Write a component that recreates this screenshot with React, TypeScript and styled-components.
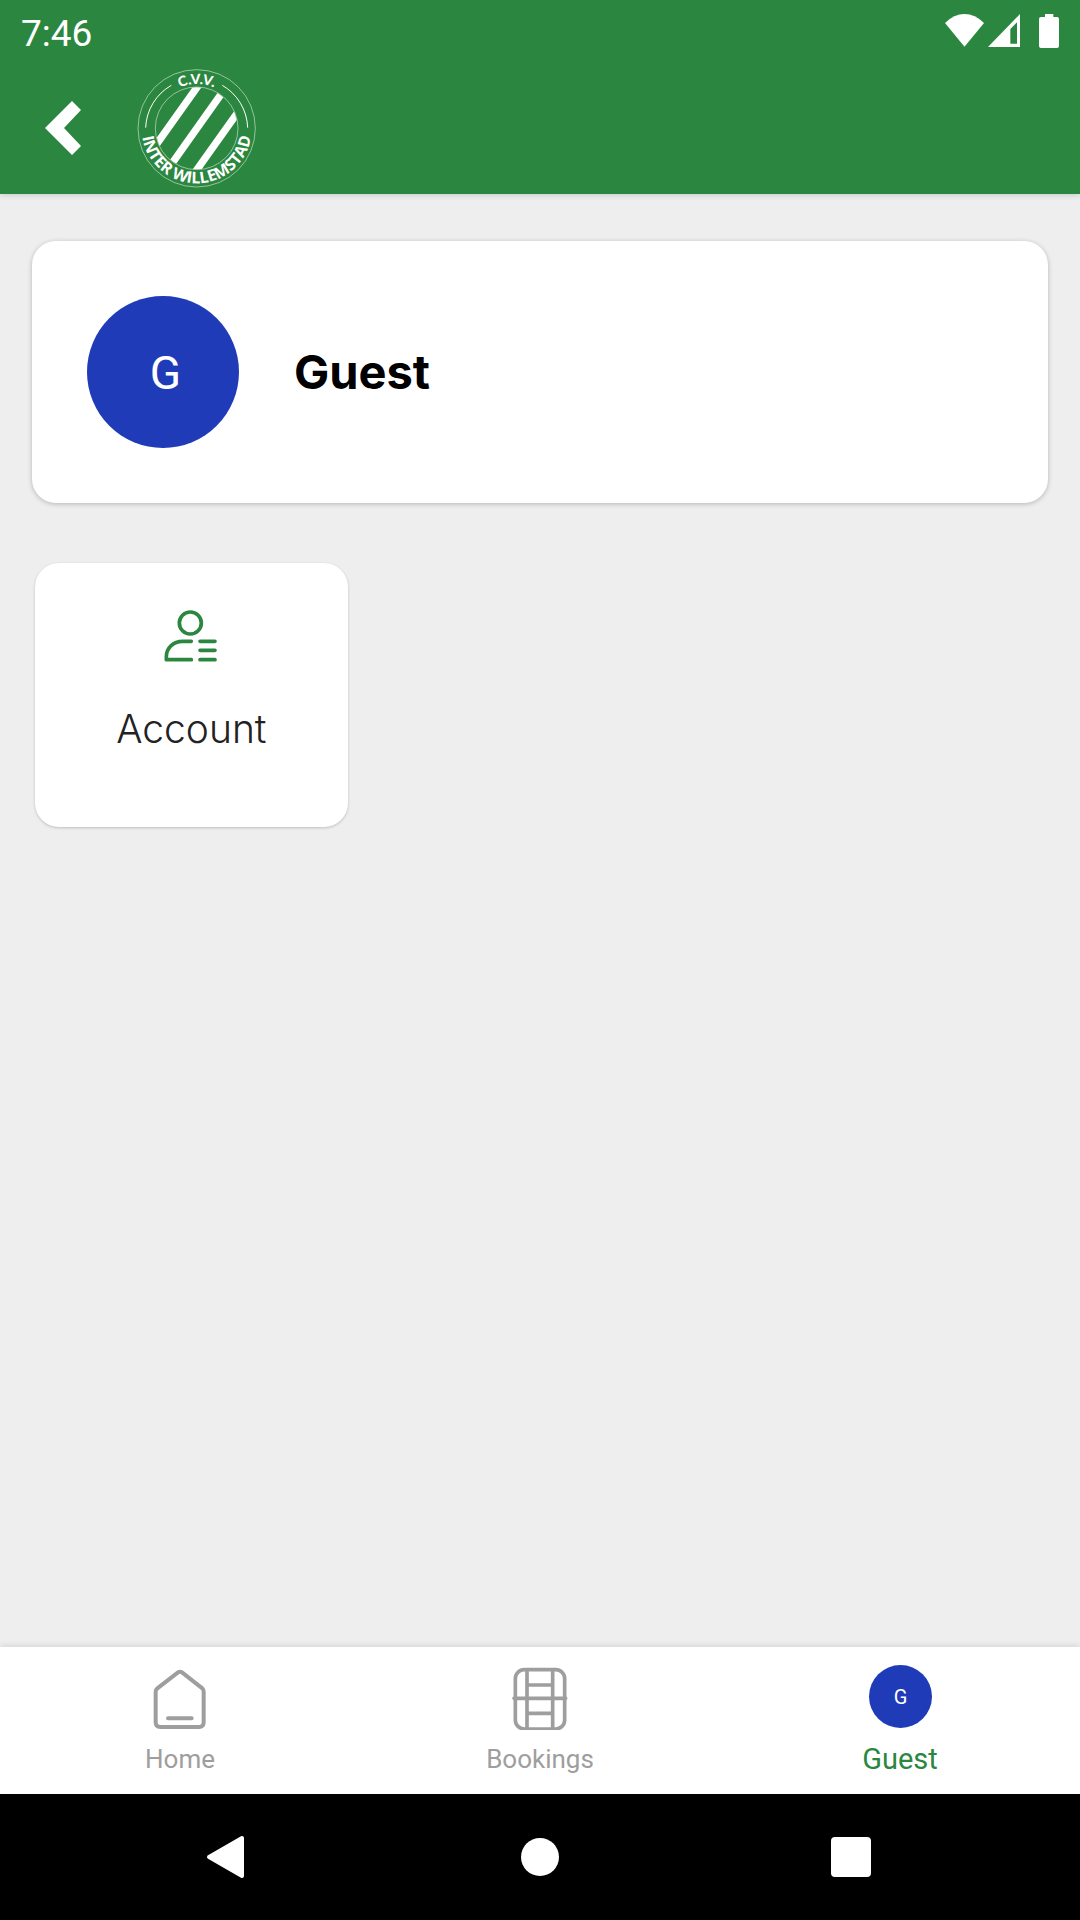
import React from "react";
import styled, { createGlobalStyle } from "styled-components";

const GREEN = "#2b873f";
const BLUE = "#1f3bb8";
const GREY = "#9e9e9e";

const GlobalStyle = createGlobalStyle`
  *, *::before, *::after { box-sizing: border-box; }
  body { margin: 0; background: #eeeeee; }
  button { font: inherit; color: inherit; background: none; border: 0; padding: 0; cursor: pointer; }
  svg { display: block; flex: none; }
`;

const Screen = styled.div`
  min-height: 100vh;
  display: flex;
  flex-direction: column;
  background: #eeeeee;
  font-family: Roboto, "Noto Sans", sans-serif;
`;

const TopArea = styled.header`
  background: ${GREEN};
  color: #fff;
  box-shadow: 0 1px 6px rgba(0, 0, 0, 0.16);
`;

const StatusBar = styled.div`
  display: flex;
  justify-content: space-between;
  height: 64px;
  padding: 13px 21px 0;
  font-size: 37px;
  line-height: 42px;
`;

const StatusIcons = styled.div`
  display: flex;
  align-items: flex-start;
  gap: 4px;
  padding-top: 1px;
`;

const Toolbar = styled.div`
  display: flex;
  align-items: center;
  gap: 48px;
  height: 130px;
  padding: 0 37px 2px;
`;

const BackButton = styled.button`
  display: grid;
  place-items: center;
  width: 52px;
  height: 64px;
`;

const Content = styled.main`
  flex: 1;
  display: flex;
  flex-direction: column;
  align-items: stretch;
  gap: 60px;
  padding: 47px 32px;
`;

const Card = styled.section`
  background: #fff;
  border-radius: 24px;
  box-shadow: 0 1px 5px rgba(0, 0, 0, 0.24);
`;

const ProfileCard = styled(Card)`
  display: flex;
  align-items: center;
  gap: 55px;
  padding: 55px;
`;

const Avatar = styled.span<{ $size: number; $font: number }>`
  display: grid;
  place-items: center;
  flex: none;
  width: ${(p) => p.$size}px;
  height: ${(p) => p.$size}px;
  padding: ${(p) => (p.$size > 100 ? "2px 0 0 5px" : "2px 0 0 1px")};
  border-radius: 50%;
  background: ${BLUE};
  color: #fff;
  font-size: ${(p) => p.$font}px;
  line-height: 1;
`;

const ProfileName = styled.h1`
  margin: 0;
  font: 700 47px/56px Inter, sans-serif;
  color: #000;
`;

const TileGrid = styled.div`
  display: grid;
  grid-template-columns: repeat(3, 1fr);
  gap: 36px;
  padding: 0 3px;
`;

const Tile = styled.button`
  && {
    display: flex;
    flex-direction: column;
    align-items: center;
    gap: 43px;
    height: 264px;
    padding-top: 47px;
    background: #fff;
    border-radius: 24px;
    box-shadow: 0 1px 3px rgba(0, 0, 0, 0.2);
    color: #222;
    font: 300 39px/48px Inter, sans-serif;
  }
`;

const TabBar = styled.nav`
  display: grid;
  grid-template-columns: repeat(3, 1fr);
  height: 147px;
  background: #fff;
  box-shadow: 0 -1px 6px rgba(0, 0, 0, 0.12);
`;

const Tab = styled.a<{ $active?: boolean }>`
  display: flex;
  flex-direction: column;
  align-items: center;
  gap: 11px;
  padding-top: 15px;
  color: ${(p) => (p.$active ? GREEN : GREY)};
  font-size: ${(p) => (p.$active ? 29 : 26)}px;
  line-height: 36px;
  text-decoration: none;
`;

const TabIcon = styled.span`
  display: grid;
  place-items: center;
  height: 68px;
`;

const SystemBar = styled.div`
  display: flex;
  justify-content: center;
  align-items: center;
  gap: 247px;
  height: 126px;
  background: #000;
  color: #fff;
`;

const SystemButton = styled.button`
  display: grid;
  place-items: center;
  width: 64px;
  height: 64px;
`;

const ClubLogo = () => (
  <svg width="120" height="120" viewBox="21 18 360 360" role="img" aria-label="C.V.V. Inter Willemstad">
    <defs>
      <clipPath id="inner"><circle cx="200" cy="199" r="123" /></clipPath>
      <path id="topArc" d="M67 199 A133 133 0 0 1 333 199" />
      <path id="bottomArc" d="M35 180 V199 A165 165 0 0 0 365 199 V180" />
    </defs>
    <g fill="none" stroke="#fff">
      <circle cx="200" cy="199" r="176" strokeWidth="2" opacity="0.75" />
      <circle cx="200" cy="199" r="124" strokeWidth="2" opacity="0.75" />
      <path d="M47 197 A153 153 0 0 1 124 70 M277 70 A153 153 0 0 1 353 197" strokeWidth="3" />
    </g>
    <g clipPath="url(#inner)" stroke="#fff" strokeWidth="22">
      <path d="M223 45 L53 284 M295 66 L107 331 M341 126 L183 348" />
    </g>
    <g fill="#fff" textAnchor="middle">
      <text fontSize="42" fontWeight="900" fontFamily="Lato, sans-serif"><textPath href="#topArc" startOffset="50%">C.V.V.</textPath></text>
      <text fontSize="48" fontWeight="700" fontFamily="'Open Sans', sans-serif"><textPath href="#bottomArc" startOffset="50%">INTER WILLEMSTAD</textPath></text>
    </g>
  </svg>
);

const WifiIcon = () => (
  <svg width="39" height="33" viewBox="75 42 117 99" fill="#fff">
    <path d="M75 69 Q102 42 133.500 42 Q165 42 192 69 L133.500 140 Z" />
  </svg>
);

const SignalIcon = () => (
  <svg width="32" height="33" viewBox="203 42 96 99" fill="#fff">
    <path fillRule="evenodd" d="M299 42 V141 H203 Z M290 67 L270 87 V131 H290 Z" />
  </svg>
);

const BatteryIcon = () => (
  <svg width="35" height="34" viewBox="312 42 105 102" fill="#fff">
    <path d="M375 42 H400 V51 H411 Q417 51 417 57 V138 Q417 144 411 144 H363 Q357 144 357 138 V57 Q357 51 363 51 H375 Z" />
  </svg>
);

const AccountIcon = () => (
  <svg width="54" height="52" viewBox="42 45 162 156" fill="none" stroke={GREEN} strokeWidth="11" strokeLinecap="round" strokeLinejoin="round">
    <circle cx="121" cy="84" r="33" />
    <path d="M124 139 H98 C69 139 49 160 49 185 V194 H124 M150 139 H195 M150 166 H195 M150 194 H195" />
  </svg>
);

const HomeIcon = () => (
  <svg width="56" height="68" viewBox="65 66 168 204" fill="none" stroke={GREY} strokeWidth="12" strokeLinecap="round" strokeLinejoin="round">
    <path d="M143 97 Q149 93 155 97 L216 145 Q220 149 220 155 V247 Q220 261 206 261 H90 Q76 261 76 247 V155 Q76 149 81 145 Z M113 235 H184" />
  </svg>
);

const BookingsIcon = () => (
  <svg width="56" height="68" viewBox="125 66 168 204" fill="none" stroke={GREY} strokeWidth="11" strokeLinecap="round">
    <rect x="135" y="89" width="148" height="178" rx="27" />
    <path d="M170 90 V266 M247 90 V266 M170 135 H247 M170 220 H247 M131 175 H286" />
  </svg>
);

export default function App() {
  return (
    <Screen>
      <GlobalStyle />
      <TopArea>
        <StatusBar>
          <span>7:46</span>
          <StatusIcons>
            <WifiIcon />
            <SignalIcon />
            <BatteryIcon />
          </StatusIcons>
        </StatusBar>
        <Toolbar>
          <BackButton aria-label="Back">
            <svg width="36" height="54" viewBox="0 0 36 54" fill="#fff">
              <path d="M0 27 L27 0 L36 9 L19 27 L36 45 L27 54 Z" />
            </svg>
          </BackButton>
          <ClubLogo />
        </Toolbar>
      </TopArea>
      <Content>
        <ProfileCard>
          <Avatar $size={152} $font={46}>G</Avatar>
          <ProfileName>Guest</ProfileName>
        </ProfileCard>
        <TileGrid>
          <Tile>
            <AccountIcon />
            Account
          </Tile>
        </TileGrid>
      </Content>
      <TabBar>
        <Tab href="#home">
          <TabIcon><HomeIcon /></TabIcon>
          Home
        </Tab>
        <Tab href="#bookings">
          <TabIcon><BookingsIcon /></TabIcon>
          Bookings
        </Tab>
        <Tab href="#guest" $active aria-current="page">
          <TabIcon><Avatar $size={63} $font={20}>G</Avatar></TabIcon>
          Guest
        </Tab>
      </TabBar>
      <SystemBar>
        <SystemButton aria-label="System back">
          <svg width="46" height="44" viewBox="0 0 46 44" fill="#fff" stroke="#fff" strokeWidth="4" strokeLinejoin="round">
            <path d="M3 22 L36 3 V41 Z" />
          </svg>
        </SystemButton>
        <SystemButton aria-label="System home">
          <svg width="40" height="40" viewBox="0 0 40 40" fill="#fff"><circle cx="20" cy="20" r="19" /></svg>
        </SystemButton>
        <SystemButton aria-label="Recent apps">
          <svg width="40" height="40" viewBox="0 0 40 40" fill="#fff"><rect width="40" height="40" rx="4" /></svg>
        </SystemButton>
      </SystemBar>
    </Screen>
  );
}
